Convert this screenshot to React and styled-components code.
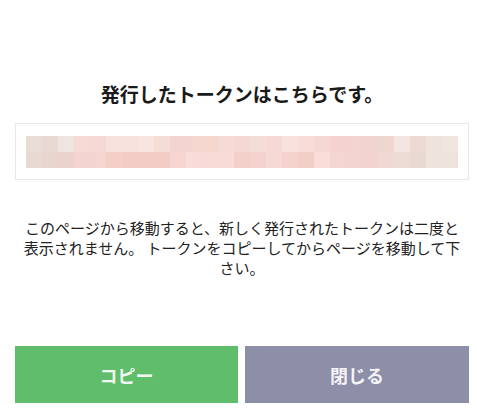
import React from "react";
import styled, { createGlobalStyle } from "styled-components";

const GlobalStyle = createGlobalStyle`
  html, body {
    margin: 0;
    padding: 0;
    background: #ffffff;
  }
  body {
    font-family: "Noto Sans CJK JP", "Noto Sans", sans-serif;
    color: #1c1c1c;
  }
`;

const Page = styled.div`
  width: 477px;
  height: 416px;
  box-sizing: border-box;
  padding: 80px 8px 0 15px;
  display: flex;
  flex-direction: column;
  background: #fff;
`;

const Title = styled.h1`
  margin: 0;
  font-size: 19px;
  line-height: 27px;
  font-weight: 700;
  text-align: center;
  color: #1a1a1a;
`;

const TokenBox = styled.div`
  margin-top: 16px;
  box-sizing: border-box;
  height: 57px;
  border: 1px solid #e8e8e8;
  padding: 12px 10px 11px;
`;

const Mosaic = styled.div`
  display: grid;
  grid-template-columns: repeat(27, 16px);
  grid-template-rows: repeat(2, 16px);
  grid-auto-flow: row;
`;

const Cell = styled.div`
  background: ${(p) => p.$c};
`;

const Notice = styled.p`
  margin: 38px 0 0;
  font-size: 15px;
  line-height: 20px;
  text-align: center;
  color: #222;
  white-space: nowrap;
`;

const Actions = styled.div`
  margin-top: 68px;
  display: grid;
  grid-template-columns: 223px 224px;
  column-gap: 7px;
`;

const Button = styled.button`
  height: 57px;
  border: none;
  border-radius: 0;
  background: ${(p) => (p.$variant === "primary" ? "#60bd6c" : "#8d8ea8")};
  color: rgba(255, 255, 255, 0.92);
  font-family: "Noto Sans CJK JP", "Noto Sans", sans-serif;
  font-size: 18px;
  font-weight: 700;
  padding: 0;
  cursor: pointer;
`;

const top = [
  "#eadcd6", "#ead9d2", "#f0e4e0", "#f6dad6", "#f6d9d4", "#f8e0dc", "#f8e2de",
  "#f8e4e0", "#f6dcd6", "#f4d4ce", "#f4d5cf", "#f4d6cf", "#f6dad6", "#f5d8d3",
  "#f6dcd7", "#f6d9d4", "#f9e1dd", "#f7dcd8", "#f6d8d3", "#f4d3ce", "#f4d4cf",
  "#f2d4ce", "#efd6d1", "#f3e6e2", "#ecd9d3", "#efe3dd", "#f1e6df",
];
const bottom = [
  "#e9d9d3", "#e8d5ce", "#e9d3cc", "#f5d4cf", "#f5d5d0", "#f3cfc8", "#f2ccc5",
  "#f2ccc5", "#f2cdc6", "#f6d5d0", "#f9dcd9", "#f8dad6", "#f8dad6", "#f3d0ca",
  "#f4d2cd", "#f6d8d4", "#f4d3ce", "#f3cec8", "#fadcd8", "#f5d5d1", "#f4d4cf",
  "#f3d3cf", "#f0d8d3", "#eddcd6", "#ead8d2", "#efe3de", "#efe4dd",
];

export default function App() {
  const cells = [...top, ...bottom];
  return (
    <>
      <GlobalStyle />
      <Page>
        <Title>発行したトークンはこちらです。</Title>
        <TokenBox>
          <Mosaic>
            {cells.map((c, i) => (
              <Cell key={i} $c={c} />
            ))}
          </Mosaic>
        </TokenBox>
        <Notice>
          このページから移動すると、新しく発行されたトークンは二度と
          <br />
          表示されません。 トークンをコピーしてからページを移動して下
          <br />
          さい。
        </Notice>
        <Actions>
          <Button $variant="primary">コピー</Button>
          <Button $variant="secondary">閉じる</Button>
        </Actions>
      </Page>
    </>
  );
}
